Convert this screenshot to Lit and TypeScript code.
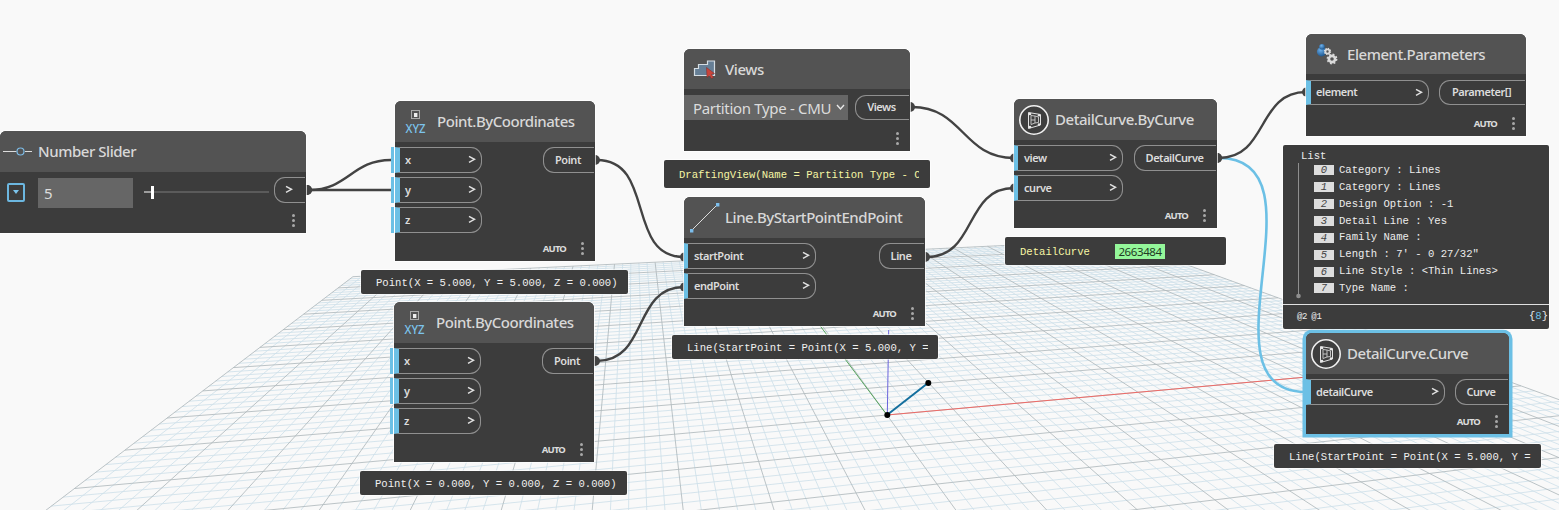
import { LitElement, html, svg, css, nothing } from "lit";
import { customElement, property } from "lit/decorators.js";
import { classMap } from "lit/directives/class-map.js";
import { styleMap } from "lit/directives/style-map.js";

type Port = string;
interface GraphNode {
  x: number; y: number; w: number; h: number;
  title: string; icon: string; titleX: number;
  kind?: "slider" | "dropdown";
  inputs?: Port[]; inW?: number; open?: boolean; compact?: boolean;
  output: string; outW: number;
  auto?: boolean; selected?: boolean;
}

const NODES: GraphNode[] = [
  { x: 0, y: 131, w: 306, h: 102, title: "Number Slider", icon: "slider", titleX: 38, kind: "slider", output: ">", outW: 32 },
  { x: 395, y: 101, w: 200, h: 160, title: "Point.ByCoordinates", icon: "xyz", titleX: 42, inputs: ["x", "y", "z"], inW: 87, open: true, output: "Point", outW: 52, auto: true },
  { x: 394, y: 302, w: 200, h: 160, title: "Point.ByCoordinates", icon: "xyz", titleX: 42, inputs: ["x", "y", "z"], inW: 87, open: true, output: "Point", outW: 52, auto: true },
  { x: 684, y: 49, w: 226, h: 102, title: "Views", icon: "views", titleX: 41, kind: "dropdown", compact: true, output: "Views", outW: 55 },
  { x: 684, y: 197, w: 241, h: 129, title: "Line.ByStartPointEndPoint", icon: "line", titleX: 41, inputs: ["startPoint", "endPoint"], inW: 132, output: "Line", outW: 46, auto: true },
  { x: 1014, y: 99, w: 203, h: 129, title: "DetailCurve.ByCurve", icon: "revit", titleX: 41, inputs: ["view", "curve"], inW: 109, output: "DetailCurve", outW: 83, auto: true },
  { x: 1306, y: 34, w: 220, h: 102, title: "Element.Parameters", icon: "gears", titleX: 41, inputs: ["element"], inW: 123, compact: true, output: "Parameter[]", outW: 87, auto: true },
  { x: 1306, y: 333, w: 203, h: 101, title: "DetailCurve.Curve", icon: "revit", titleX: 41, inputs: ["detailCurve"], inW: 139, output: "Curve", outW: 54, auto: true, selected: true },
];

const PREVIEWS = [
  { x: 361, y: 270, w: 267, h: 24, text: "Point(X = 5.000, Y = 5.000, Z = 0.000)", tone: "" },
  { x: 360, y: 471, w: 267, h: 24, text: "Point(X = 0.000, Y = 0.000, Z = 0.000)", tone: "" },
  { x: 664, y: 160, w: 266, h: 28, text: "DraftingView(Name = Partition Type - CMU)", tone: "yellow" },
  { x: 672, y: 335, w: 266, h: 24, text: "Line(StartPoint = Point(X = 5.000, Y = 5.000", tone: "" },
  { x: 1005, y: 237, w: 221, h: 28, text: "DetailCurve", tone: "yellow", id: "2663484" },
  { x: 1274, y: 444, w: 267, h: 24, text: "Line(StartPoint = Point(X = 5.000, Y = 5.000", tone: "" },
];

const LIST = ["Category : Lines", "Category : Lines", "Design Option : -1", "Detail Line : Yes",
  "Family Name :", "Length : 7' - 0 27/32\"", "Line Style : <Thin Lines>", "Type Name :"];

const WIRES: [number, number, number, number, boolean?][] = [
  [309, 190, 391, 160], [309, 190, 391, 190],
  [597, 160, 684, 257], [597, 361, 684, 287],
  [912, 107, 1014, 158], [927, 257, 1014, 188],
  [1219, 158, 1306, 392, true], [1219, 158, 1306, 92],
];

/** Projects a point of the ground plane onto the viewport. */
function project(x: number, y: number): [number, number] {
  const w = 1 + 0.00348 * x + 0.01644 * y;
  return [(887 + 16.51 * x + 10.4 * y) / w, (415 + 0.23 * x + 1.05 * y) / w];
}
function groundPath(major: boolean): string {
  const out: string[] = [];
  const seg = (a: [number, number], b: [number, number]) =>
    out.push(`M${a[0].toFixed(1)} ${a[1].toFixed(1)}L${b[0].toFixed(1)} ${b[1].toFixed(1)}`);
  for (let i = -50; i <= 50; i++) {
    if ((i % 5 === 0) !== major) continue;
    seg(project(i, -28), project(i, 50));
    if (i >= -28) seg(project(-50, i), project(50, i));
  }
  return out.join("");
}

@customElement("ground-scene")
export class GroundScene extends LitElement {
  static styles = css`
    :host { display: block; position: absolute; inset: 0; }
    svg { display: block; }
    .minor { stroke: #cfe0ea; stroke-width: 0.85; fill: none; }
    .major { stroke: #b0b9bd; stroke-width: 0.85; fill: none; }
  `;
  render() {
    const px = project(50, 0);
    const py = project(0, 50);
    return html`<svg width="1559" height="510" viewBox="0 0 1559 510">
      <path class="minor" d=${groundPath(false)} />
      <path class="major" d=${groundPath(true)} />
      <path d="M887 415L${px[0]} ${px[1]}" stroke="#ee6a66" />
      <path d="M887 415L${py[0] - 4} ${py[1]}" stroke="#55a35b" />
      <path d="M887.3 415L888.7 330" stroke="#6a63dc" />
      <path d="M887 415L928 383" stroke="#146f9e" stroke-width="2" />
      <circle cx="887.3" cy="415" r="3" /><circle cx="928.3" cy="383" r="3" />
    </svg>`;
  }
}

@customElement("wire-layer")
export class WireLayer extends LitElement {
  static styles = css`
    :host { display: block; position: absolute; inset: 0; }
    svg { display: block; }
    .wire { fill: none; stroke: #434343; stroke-width: 2.4; }
    .active { stroke: #6cc0e5; stroke-width: 2.6; }
    .end { fill: #434343; }
  `;
  render() {
    return html`<svg width="1559" height="510" viewBox="0 0 1559 510">
      ${WIRES.map(([a, b, c, d, on]) => {
        const o = Math.hypot(c - a, d - b) * 0.45;
        return svg`<path class=${on ? "wire active" : "wire"} d="M${a} ${b}C${a + o} ${b} ${c - o} ${d} ${c} ${d}" />
          <circle class="end" cx=${a - 2} cy=${b} r="5" />
          ${c > 400 && !on ? svg`<circle class="end" cx=${c + 0.5} cy=${d} r="4.5" />` : nothing}`;
      })}
    </svg>`;
  }
}

const gear = (cx: number, cy: number, r: number) => svg`
  <circle cx=${cx} cy=${cy} r=${r} fill="none" stroke="#dadada" stroke-width=${r * 0.85} />
  <circle cx=${cx} cy=${cy} r=${r * 1.5} fill="none" stroke="#dadada" stroke-width=${r * 0.5} stroke-dasharray="${r * 0.59} ${r * 0.59}" />`;

const ICONS: Record<string, unknown> = {
  slider: svg`<path d="M3 20.500h13.500M25 20.500h7" stroke="#dcdcdc" /><circle cx="20.500" cy="20.500" r="3.500" fill="none" stroke="#7cbbe6" stroke-width="1.200" />`,
  xyz: svg`<rect x="16.500" y="9.500" width="8" height="8" fill="none" stroke="#a9a9a9" /><rect x="19" y="12" width="3.400" height="4" fill="#eee" />
    <text x="10.500" y="32" class="xyz" textLength="20" lengthAdjust="spacingAndGlyphs">XYZ</text>`,
  views: svg`<path d="M10.500 26.500V19.500H14.500V15.500H23.500V12H30.500V26.500Z" fill="#667f96" stroke="#d5dde3" stroke-width="1.200" />
    <path d="M22.500 18.500L30.500 24.500L27.500 25.300L29.500 28.500L27.300 29.500L25.500 26.300L23 28.500Z" fill="#c9453c" stroke="#7d2a26" stroke-width=".5" />`,
  line: svg`<path d="M7.500 33.500L33.500 7.500" stroke="#ddd" /><path d="M6 32h3.400v3.400H6zM32 6h3.400v3.400H32z" fill="#7cbdeb" />`,
  revit: svg`<circle cx="20" cy="21" r="14.200" fill="#3e3e3e" stroke="#f0f0f0" stroke-width="1.600" />
    <path d="M14.500 13.500L26.500 15.500V26L14.500 29.500Z" fill="none" stroke="#e2e2e2" stroke-width="1" />
    <path d="M17 16.500L21 17V24L17 25.500ZM21 17L24.500 18V23.500L21 24M17 21h4" fill="none" stroke="#cfcfcf" stroke-width=".9" />
    <circle cx="16" cy="15" r="1.300" fill="#e8e8e8" /><circle cx="25" cy="16.300" r="1.200" fill="#e8e8e8" /><circle cx="16" cy="28" r="1.300" fill="#e8e8e8" /><circle cx="25" cy="25.500" r="1.200" fill="#e8e8e8" />`,
  gears: svg`<defs><radialGradient id="blue" cx=".4" cy=".3" r=".7"><stop offset="0" stop-color="#6fb1ea" /><stop offset="1" stop-color="#1d5790" /></radialGradient></defs>
    <circle cx="15.500" cy="17.800" r="4.600" fill="url(#blue)" /><circle cx="16" cy="12.800" r="2.800" fill="url(#blue)" />
    ${gear(21.5, 17.5, 2.1)}${gear(26, 25, 3.1)}`,
};

@customElement("graph-node")
export class GraphNodeView extends LitElement {
  @property({ attribute: false }) node!: GraphNode;
  static styles = css`
    :host { display: block; }
    * { box-sizing: border-box; }
    .node { display: flex; flex-direction: column; width: 100%; height: 100%; background: #3c3c3c; border-radius: 6px 6px 0 0; box-shadow: 0 0 0 1px rgba(255,255,255,.7); color: #dcdcdc; font-family: "Noto Sans", sans-serif; }
    .selected { box-shadow: 0 0 0 3.500px #6cc0e5; }
    .head { display: flex; flex: none; align-items: center; height: 41px; background: #535353; border-radius: 6px 6px 0 0; overflow: hidden; }
    .icon { flex: none; height: 41px; }
    .xyz { font: 500 12px "Noto Sans", sans-serif; fill: #7cc4ec; }
    .title { font-size: 15px; font-weight: 500; letter-spacing: -0.450px; color: #d8d8d8; white-space: nowrap; line-height: 20px; padding-bottom: 1px; }
    .body { display: flex; justify-content: space-between; padding: 5px 1px 0 0; }
    .compact .head { height: 40px; }
    .compact .title { padding-bottom: 0; }
    .compact .body { padding-top: 6px; }
    .compact .port { height: 25px; }
    .ins { display: flex; flex-direction: column; gap: 4.200px; }
    .port { display: flex; align-items: center; height: 26px; font-size: 11px; font-weight: 600; letter-spacing: -0.450px; line-height: 14px; border: 1px solid #909090; white-space: nowrap; padding-bottom: 1px; }
    .in { justify-content: space-between; border-left: 5px solid #6cc0e5; border-radius: 0 11px 11px 0; padding-left: 5px; padding-right: 5px; }
    .in.two { border-left: 4px solid #6cc0e5; padding-left: 6px; }
    .open { border-left: 5px solid #6cc0e5; box-shadow: -1px 0 0 #fff, -4px 0 0 #6cc0e5; }
    .out { justify-content: center; border-right: 0; border-radius: 11px 0 0 11px; padding-right: 2px; }
    .foot { display: flex; align-items: center; justify-content: flex-end; gap: 15px; height: 14px; margin-top: auto; margin-bottom: 6px; padding-right: 11px; font-size: 9.500px; font-weight: 700; }
    .auto { letter-spacing: -0.850px; }
    .dots { display: grid; gap: 2px; }
    .dots i { width: 3px; height: 3px; border-radius: 50%; background: #a8a8a8; }
    .ctl { display: flex; align-items: center; }
    .toggle { display: grid; place-items: center; width: 18px; height: 19px; margin: 0 13px 1px 7px; border: 2px solid #6cb7e0; border-radius: 2px; }
    .value { width: 95px; height: 30px; padding: 0 6px; margin-top: 1px; background: #666; font-size: 15px; line-height: 30px; }
    .track { width: 126px; height: 14px; margin-left: 11px; margin-bottom: 1px; }
    .select { display: flex; align-items: center; justify-content: space-between; width: 164px; height: 25px; padding: 0 3px 0 9px; background: #666; font-size: 15px; letter-spacing: -0.320px; white-space: nowrap; }
    svg { display: block; }
  `;
  private chevron = html`<svg width="8" height="9" viewBox="0 0 8 9"><path d="M1 1.300L6.500 4.300L1 7.300" fill="none" stroke="#e0e0e0" stroke-width="1.500" /></svg>`;
  private controls(n: GraphNode) {
    if (n.kind === "slider") return html`<div class="ctl">
      <span class="toggle"><svg width="6" height="4"><path d="M0 0h6L3 4z" fill="#7cc4ec" /></svg></span>
      <span class="value">5</span>
      <svg class="track" width="126" height="14"><path d="M0 7h8" stroke="#fff" /><path d="M8 7h117" stroke="#7b7b7b" /><rect x="7" y="1" width="3" height="13" fill="#fff" /></svg>
    </div>`;
    if (n.kind === "dropdown") return html`<div class="select"><span class="choice">Partition Type - CMU</span>
      <svg width="9" height="7"><path d="M1 1L4.500 5L8 1" fill="none" stroke="#e8e8e8" stroke-width="1.400" /></svg></div>`;
    return html`<div class="ins">${n.inputs!.map(p => html`
      <div class=${classMap({ port: true, in: true, open: !!n.open, two: n.inputs!.length === 2 })} style=${styleMap({ width: n.inW + "px" })}><span>${p}</span>${this.chevron}</div>`)}</div>`;
  }
  render() {
    const n = this.node;
    return html`<div class=${classMap({ node: true, selected: !!n.selected, compact: !!n.compact })}>
      <div class="head">
        <svg class="icon" width=${n.titleX} height="41">${ICONS[n.icon]}</svg>
        <span class="title">${n.title}</span>
      </div>
      <div class="body">${this.controls(n)}
        <div class="port out" style=${styleMap({ width: n.outW - 1 + "px" })}>${n.output === ">" ? this.chevron : n.output}</div>
      </div>
      <div class="foot">${n.auto ? html`<span class="auto">AUTO</span>` : nothing}<span class="dots"><i></i><i></i><i></i></span></div>
    </div>`;
  }
}

@customElement("list-preview")
export class ListPreview extends LitElement {
  static styles = css`
    :host { display: flex; flex-direction: column; background: #3c3c3c; border-radius: 2px; color: #ececec; font: 10.600px/17px "Liberation Mono", monospace; box-shadow: 0 0 0 1px rgba(255,255,255,.6); }
    .head { height: 14px; padding: 3px 0 0 18px; }
    .tree { position: relative; height: 142px; padding: 0 0 0 31px; }
    .rail { position: absolute; left: 13px; top: 1px; }
    .row { display: flex; align-items: center; height: 16.860px; }
    .n { width: 20px; height: 10px; margin-right: 5px; background: #ddd; color: #444; font-size: 10.500px; line-height: 10px; font-style: italic; text-align: center; }
    .foot { display: flex; justify-content: space-between; align-items: center; flex: 1; border-top: 1px solid #e0e0e0; padding: 0 1px 2px 14px; }
    .levels { font-size: 9px; letter-spacing: -0.300px; word-spacing: -1px; margin-top: 2px; }
    .count b { color: #6cc0e5; font-weight: 400; }
  `;
  render() {
    return html`<div class="head">List</div>
      <div class="tree">
        <svg class="rail" width="5" height="136"><path d="M2.500 0V133" stroke="#8e8e8e" /><circle cx="2.500" cy="133" r="2.300" fill="#8e8e8e" /></svg>
        ${LIST.map((t, i) => html`<div class="row"><span class="n">${i}</span><span>${t}</span></div>`)}
      </div>
      <div class="foot"><span class="levels">@2 @1</span><span class="count">{<b>8</b>}</span></div>`;
  }
}

@customElement("app-root")
export class AppRoot extends LitElement {
  static styles = css`
    :host { display: block; position: relative; width: 1559px; height: 510px; overflow: hidden; background: #f9f9f9; }
    .at { position: absolute; }
    .preview { position: absolute; box-sizing: border-box; display: flex; align-items: center; padding: 1px 10px 0 15px; background: #3c3c3c; border-radius: 2px; color: #f0f0f0; font: 10.600px "Liberation Mono", monospace; box-shadow: 0 0 0 1px rgba(255,255,255,.6); }
    .yellow { color: #f6f6a4; padding-right: 11px; }
    .clip { overflow: hidden; white-space: pre; }
    .id { margin-left: 25px; padding: 0 3.500px; height: 15px; background: #94f79a; color: #223a24; font: 11.500px/15px "Noto Sans", sans-serif; letter-spacing: -0.400px; }
  `;
  render() {
    const box = (o: { x: number; y: number; w: number; h: number }) =>
      styleMap({ left: o.x + "px", top: o.y + "px", width: o.w + "px", height: o.h + "px" });
    return html`<ground-scene></ground-scene><wire-layer></wire-layer>
      ${NODES.map(n => html`<graph-node class="at" style=${box(n)} .node=${n}></graph-node>`)}
      ${PREVIEWS.map(p => html`<div class="preview ${p.tone}" style=${box(p)}><span class="clip">${p.text}</span>${p.id ? html`<span class="id">${p.id}</span>` : nothing}</div>`)}
      <list-preview class="at" style=${box({ x: 1283, y: 145, w: 266, h: 184 })}></list-preview>`;
  }
}
